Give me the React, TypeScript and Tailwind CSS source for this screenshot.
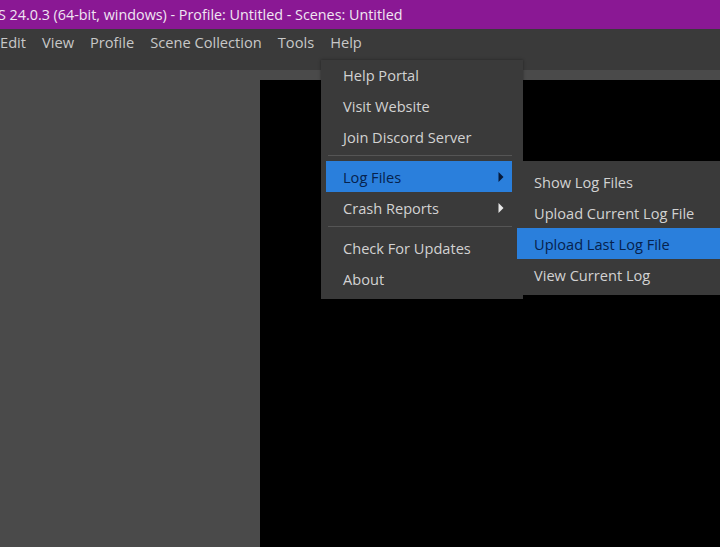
const FONT = "font-['Open_Sans','Noto_Sans',sans-serif]"

const MENUBAR = ["Edit", "View", "Profile", "Scene Collection", "Tools", "Help"]

function Caret({ dark }: { dark?: boolean }) {
  return (
    <svg width="6" height="10" viewBox="0 0 6 10" className="absolute right-[8px] top-[11px]">
      <path d="M0.5 0 L5.5 5 L0.5 10 Z" fill={dark ? "#071a3a" : "#e8e8e8"} />
    </svg>
  )
}

function Item({ label, active, caret, low }: { label: string; active?: boolean; caret?: boolean; low?: boolean }) {
  return (
    <div
      className={`relative flex h-[31px] items-center pl-[17px] text-[14.6px] ${low ? "pt-[2px]" : ""} ${
        active ? "bg-[#2a7fdc] text-[#06224d]" : "text-[#d2d2d2]"
      }`}
    >
      {label}
      {caret && <Caret dark={active} />}
    </div>
  )
}

export default function App() {
  return (
    <div className={`relative flex h-[547px] w-[720px] flex-col overflow-hidden bg-[#4a4a4a] ${FONT}`}>
      <div className="flex h-[29px] shrink-0 items-center whitespace-nowrap bg-[#8a1894] text-[14.33px] text-[#f0e6f2]">
        <span className="ml-[-2px]">S 24.0.3 (64-bit, windows) - Profile: Untitled - Scenes: Untitled</span>
      </div>

      <div className="flex h-[41px] shrink-0 items-start gap-[16px] bg-[#3a3a3a] pt-[3px] text-[14.65px] leading-[20px] text-[#c8c8c8]">
        {MENUBAR.map((m) => (
          <span key={m}>{m}</span>
        ))}
      </div>

      <div className="flex flex-1 pt-[10px]">
        <div className="w-[260px] shrink-0" />
        <div className="flex-1 bg-black" />
      </div>

      <div className="absolute left-[321px] top-[60px] w-[202px] bg-[#3a3a3a] pb-[4px] pl-[5px] pr-[11px] shadow-[0_0_3px_rgba(0,0,0,0.4)]">
        <Item label="Help Portal" />
        <Item label="Visit Website" />
        <Item label="Join Discord Server" />
        <div className="mb-[5px] ml-[2px] mt-[2px] h-px bg-[#555555]" />
        <Item label="Log Files" active caret low />
        <Item label="Crash Reports" caret low />
        <div className="mb-[6px] ml-[2px] mt-[3px] h-px bg-[#555555]" />
        <Item label="Check For Updates" />
        <Item label="About" />
      </div>

      <div className="absolute left-[512px] top-[161px] w-[208px] bg-[#3a3a3a] pb-[5px] pl-[5px] pt-[5px]">
        <Item label="Show Log Files" low />
        <Item label="Upload Current Log File" low />
        <Item label="Upload Last Log File" active low />
        <Item label="View Current Log" low />
      </div>
    </div>
  )
}
